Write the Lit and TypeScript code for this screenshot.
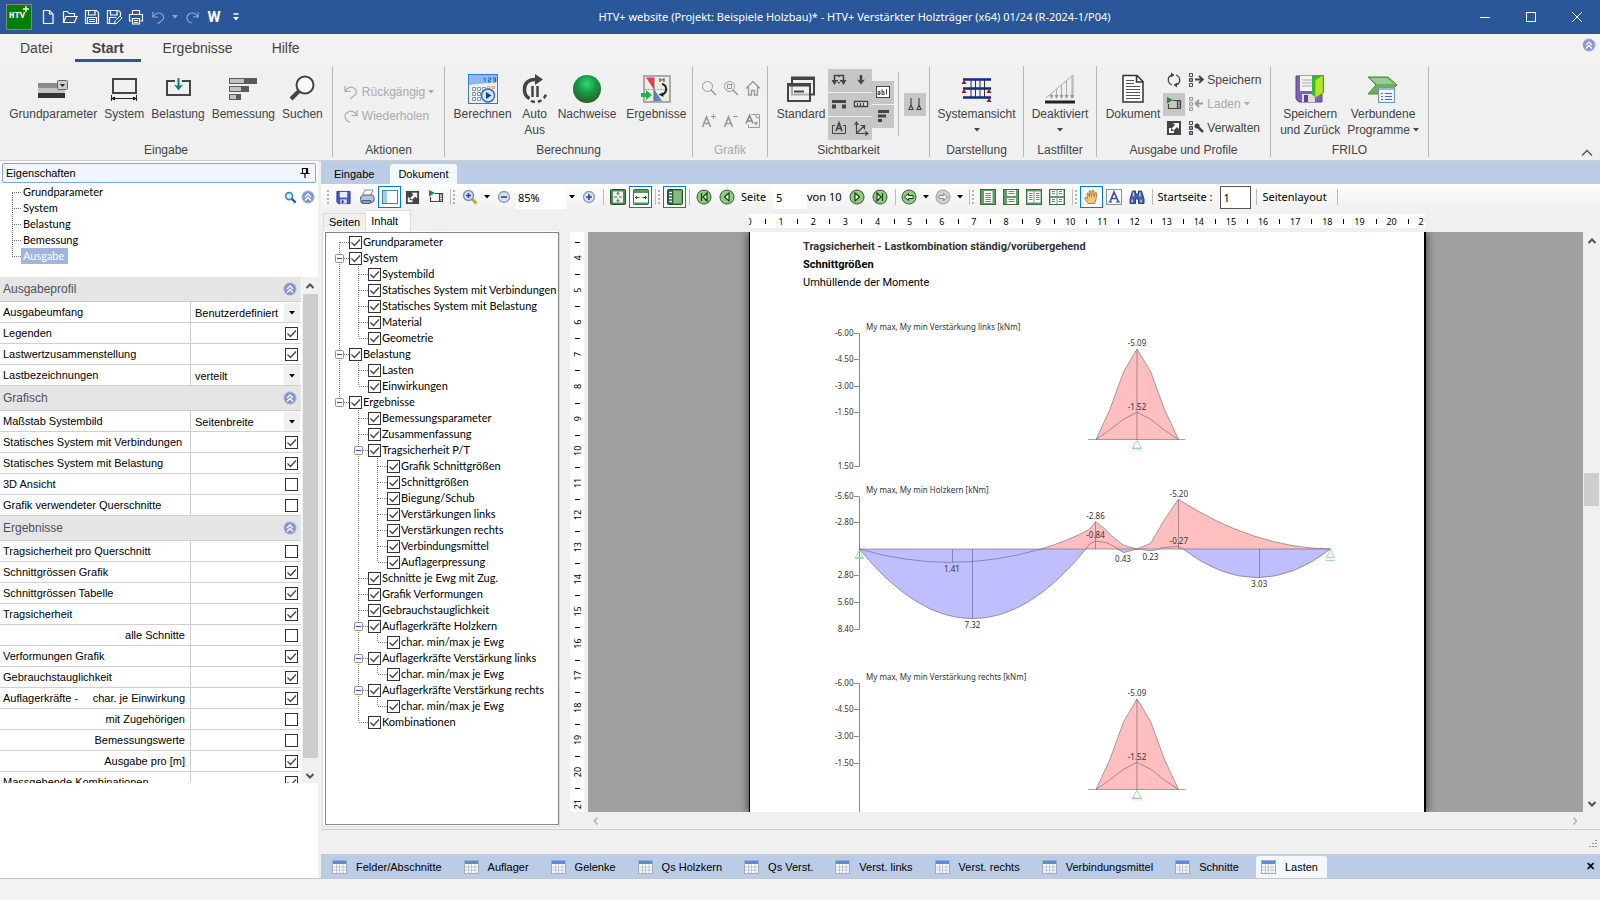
import { LitElement, html, svg, css, nothing, SVGTemplateResult, TemplateResult } from "lit";
import { customElement } from "lit/decorators.js";
import { classMap } from "lit/directives/class-map.js";

const FRAME = "#444";

const ICONS: Record<string, [string, SVGTemplateResult]> = {
  logo: ["0 0 26 26", svg`<rect x=".5" y=".5" width="25" height="25" fill="#008000" stroke="#7d8a7d"/><path d="M20 2v6M17 5h6" stroke="#fff" fill="none" stroke-width="1.3"/>`],
  fileNew: ["0 0 16 16", svg`<path d="M3.500 1.500h6l3.500 3.500v9.500h-9.500zM9.500 1.500v3.500h3.500" fill="none" stroke="#fff" stroke-width="1.200"/>`],
  folder: ["0 0 16 16", svg`<path d="M1.500 13.500v-11h4l1.500 2h5.500v2.500M1.500 13.500l2.500-6h11l-2.500 6z" fill="none" stroke="#fff" stroke-width="1.200"/>`],
  disk: ["0 0 16 16", svg`<path d="M1.500 1.500h11l2 2v11h-13zM4.500 1.500v4.500h6.500v-4.500M3.500 14.500v-6h9v6M5 10.500h6M5 12.500h6" fill="none" stroke="#fff" stroke-width="1.200"/>`],
  diskEdit: ["0 0 16 16", svg`<path d="M8 14.500h-6.500v-13h11l2 2v4M4.500 1.500v4.500h6.500v-4.500M3.500 14.500v-6h7" fill="none" stroke="#fff" stroke-width="1.200"/><path d="M8 15l1-3 5-5 2 2-5 5z" fill="#2a579a" stroke="#fff"/>`],
  printW: ["0 0 16 16", svg`<path d="M4.500 5.500v-4h7v4M3.500 12h-2v-6.500h13v6.500h-2M4.500 9.500h7v5.500h-7zM6 11.500h4M6 13.500h4" fill="none" stroke="#fff" stroke-width="1.200"/>`],
  undo: ["0 0 16 16", svg`<path d="M2 2v5.500h5.500M2 7.500c2-3 5-5 8-4s4 4 3 6-3 3-6 5.500" fill="none" stroke="currentColor" stroke-width="1.200"/>`],
  redo: ["0 0 16 16", svg`<path d="M14 2v5.500h-5.500M14 7.500c-2-3-5-5-8-4s-5 4-3.500 7 3 3 4.500 3.500" fill="none" stroke="currentColor" stroke-width="1.200"/>`],
  overflow: ["0 0 8 10", svg`<path d="M1.500 2h5" stroke="#fff" stroke-width="1.500"/><path d="M1 5h6l-3 3.500z" fill="#fff"/>`],
  min: ["0 0 12 12", svg`<path d="M1 6.500h10" stroke="#fff"/>`],
  max: ["0 0 12 12", svg`<rect x="1.500" y="1.500" width="9" height="9" fill="none" stroke="#fff"/>`],
  close: ["0 0 12 12", svg`<path d="M1 1l10 10M11 1L1 11" stroke="#fff"/>`],
  caret: ["0 0 6 4", svg`<path d="M0 0h6l-3 3.500z" fill="currentColor"/>`],
  params: ["0 0 32 22", svg`<rect x="1" y="5" width="27" height="6" fill="#8a8a8a"/><rect x="1" y="10" width="27" height="5" fill="#c4c4c4"/><rect x="1" y="15" width="27" height="5" fill="#333"/><rect x="20.500" y="2.500" width="10" height="9" rx="1" fill="#ccc" stroke="#666"/><path d="M23 6h5l-2.500 3z" fill="#222"/>`],
  system: ["0 0 30 26", svg`<rect x="4" y="3" width="23" height="14" fill="none" stroke=${FRAME} stroke-width="2"/><path d="M2.500 19v6M27.500 19v6M3 22.500h24M3 22.500l2.500-1.500v3zM27 22.500l-2.500-1.500v3z" stroke="#222" fill="#222"/>`],
  load: ["0 0 30 26", svg`<rect x="4" y="5" width="23" height="14" fill="none" stroke=${FRAME} stroke-width="2"/><rect x="12" y="2" width="7" height="8" fill="#f0f0f0"/><path d="M15.500 2v8" stroke="#0a8080" stroke-width="2"/><path d="M11 8.500l4.500 1.500 4.500-1.500-4.500 6z" fill="#0a8080"/>`],
  design: ["0 0 30 26", svg`<path d="M1 2h28v6H1zM1 10h20v6H1zM1 18h12v6H1z" fill="#5a5a5a"/><path d="M2 3h14v4H2zM2 11h11v4H2zM2 19h6v4H2z" fill="#c2c2c2"/>`],
  search: ["0 0 28 28", svg`<circle cx="17" cy="10" r="8.500" fill="#fafafa" stroke=${FRAME} stroke-width="2"/><path d="M11 16l-8 8" stroke=${FRAME} stroke-width="4"/>`],
  calc: ["0 0 30 30", svg`<rect x=".5" y=".5" width="29" height="29" fill="#eef3fb" stroke="#3b78c8"/><path d="M1 1h28v7l-28 3z" fill="#8db8ee"/><path d="M15.500 5l1.500-1v4M20 4h2.500v2h-2v2h2.500M25 4h2.500v4h-2.500M25.500 6h2" stroke="#2a5aa0" stroke-width=".9" fill="none"/><g fill="#fff" stroke="#7a8698" stroke-width=".9"><path d="M4.500 13.500h3v3h-3zM9.500 13.500h3v3h-3zM14.500 13.500h3v3h-3zM4.500 18.500h3v3h-3zM9.500 18.500h3v3h-3zM4.500 23.500h3v3h-3zM9.500 23.500h3v3h-3z"/><path d="M19.500 12.500h2.500v2h-2.500zM24 12.500h2.500v2h-2.500z" stroke="#e2a24a"/></g><circle cx="20" cy="21.500" r="6.500" fill="#cfe5fa" stroke="#2f70bc" stroke-width="1.500"/><path d="M18 18l5.500 3.500-5.500 3.500z" fill="#173f7a"/>`],
  auto: ["0 0 26 30", svg`<path d="M14 5.500C6 5 2 10 2.500 16c0 4 2 7 5 8.500" fill="none" stroke=${FRAME} stroke-width="3.500"/><path d="M13 0l8 5.500-8 5.500z" fill=${FRAME}/><path d="M10.500 12v11M15.500 12v11" stroke=${FRAME} stroke-width="2.500"/><path d="M9 27c4 2 9 1 12-2s3-5 3-6" fill="none" stroke=${FRAME} stroke-width="2.500" stroke-dasharray="4 3"/>`],
  ball: ["0 0 30 30", svg`<defs><radialGradient id="gb" cx=".5" cy=".32" r=".7"><stop offset="0" stop-color="#35d877"/><stop offset=".45" stop-color="#17994a"/><stop offset="1" stop-color="#2c5c1c"/></radialGradient></defs><circle cx="15" cy="15" r="14" fill="url(#gb)"/>`],
  results: ["0 0 32 30", svg`<rect x="4" y="2" width="26" height="26" fill="#efece4" stroke="#a9a9a9" stroke-width="2"/><path d="M6 3.500h8v12z" fill="#f0384c"/><path d="M14 15l8 12h-8z" fill="#5a86c0"/><path d="M14 3.500v24" stroke="#667"/><path d="M5 15.500h24" stroke="#aaa" stroke-dasharray="2 1"/><path d="M22 10c5 1 6 8 0 11" fill="none" stroke="#222" stroke-width="2"/><path d="M18.500 20.500l4.500-2 .5 4.500z" fill="#222"/><path d="M20 8V4.500l2 2 2-2V8" fill="none" stroke="#333"/><path d="M1 19h5v-3l6 5-6 5v-3H1z" fill="#25b34b"/>`],
  lens: ["0 0 16 16", svg`<circle cx="6.500" cy="6.500" r="5" fill="none" stroke="#999"/><path d="M10 10l5 5" stroke="#999" stroke-width="1.500"/>`],
  lensFit: ["0 0 16 16", svg`<circle cx="6.500" cy="6.500" r="5" fill="none" stroke="#999"/><rect x="4.500" y="4.500" width="4" height="4" fill="none" stroke="#999"/><path d="M10 10l5 5" stroke="#999" stroke-width="1.500"/>`],
  home: ["0 0 16 16", svg`<path d="M1 8.500L8 1.500l7 7M3.500 7v8h3v-4.500h3V15h3V7" fill="none" stroke="#999" stroke-width="1.300"/>`],
  fontUp: ["0 0 16 16", svg`<path d="M1.500 14L5.500 4l4 10M3 10.500h5.500" fill="none" stroke="#999" stroke-width="1.600"/><path d="M10 3.500h5M12.500 1v5" stroke="#999"/>`],
  fontDown: ["0 0 16 16", svg`<path d="M1.500 14L5.500 4l4 10M3 10.500h5.500" fill="none" stroke="#999" stroke-width="1.600"/><path d="M10 3.500h5" stroke="#999"/>`],
  fontDoc: ["0 0 16 16", svg`<path d="M6 1.500h8.500v13h-11v-3M11 1.500v3h3" fill="none" stroke="#999"/><path d="M1 10.500l3.500-8 3.500 8M2.500 8h4" fill="none" stroke="#888" stroke-width="1.600"/><path d="M9 9h4l-2 4z" fill="#999"/>`],
  windows: ["0 0 30 28", svg`<g fill="none" stroke=${FRAME}><rect x="6" y="2.500" width="22" height="17" stroke-width="2"/><path d="M5 3.500h24" stroke-width="3"/><rect x="2" y="9" width="22" height="17" stroke-width="2" fill="#f0f0f0" fill-opacity=".6"/><path d="M1 10h24" stroke-width="3"/><path d="M8 16.500h10" stroke-width="2"/></g>`],
  v1: ["0 0 16 16", svg`<path d="M3.500 9V3.500h9V9M8 3.500V8" fill="none" stroke=${FRAME} stroke-width="1.600"/><path d="M.5 8h6l-3 5zM5.500 8h5L8 12zM9.500 8h6l-3 5z" fill=${FRAME}/><path d="M7 5h2v5H7z" fill="#c8c6c4"/>`],
  v2: ["0 0 16 16", svg`<path d="M8 3v6" stroke=${FRAME} stroke-width="2.500"/><path d="M4 7.500l4 1 4-1-4 5z" fill=${FRAME}/>`],
  v3: ["0 0 16 16", svg`<path d="M1 4h14v3H1zM1 8.500h4v4H1zM11 8.500h4v4h-4z" fill=${FRAME}/>`],
  v4: ["0 0 16 16", svg`<path d="M1.500 5.500h13v5h-13zM4.500 7v3M7.500 7v3M10.500 7v3" fill="#eee" stroke=${FRAME} stroke-width="1.400"/>`],
  v5: ["0 0 16 16", svg`<path d="M4 5.500H1.500v8h13v-8H12" fill="none" stroke=${FRAME}/><path d="M5 11l3-8 3 8M6 8.500h4" fill="none" stroke=${FRAME} stroke-width="1.700"/>`],
  v6: ["0 0 16 16", svg`<path d="M3.500 14V3M1.500 5l2-3 2 3M3 13.500h11M12 11.500l3 2-3 2M4 13l7-7M7.500 5.500h4v4" fill="none" stroke=${FRAME} stroke-width="1.200"/>`],
  v7: ["0 0 16 16", svg`<rect x="1.500" y="2.500" width="13" height="11" fill="#fff" stroke=${FRAME}/><path d="M3 7.500h2v3h-2v-1.500h2M7 5v5.500h2v-3H7M11.500 5v5.500" fill="none" stroke=${FRAME}/>`],
  v8: ["0 0 16 16", svg`<path d="M3 2h11v3H3zM3 6.500h8v3H3zM3 11h4v3H3z" fill=${FRAME}/>`],
  v9: ["0 0 16 16", svg`<path d="M4 2v7M12 2v7M4 9l-2 4.500h4zM12 9l-2 4.500h4z" fill="none" stroke=${FRAME} stroke-width="1.200"/>`],
  sysview: ["0 0 32 26", svg`<path d="M2 3.500h28M2 12.500h28M2 21.500h28" stroke="#0a2a8c" stroke-width="2.500"/><path d="M10 4v17M14.500 4v17M19 4v17M23.500 4v17" stroke="#333"/><path d="M3 4l-2.500 4h5zM3 13l-2.500 4h5zM28 13l-2.500 4h5zM28 22l-2.500 4h5z" fill="#a01020"/>`],
  filter: ["0 0 32 30", svg`<path d="M2 24L29 1v23" fill="none" stroke="#aaa"/><path d="M7.500 19v5M12.500 15v9M17.500 11v13M22.500 7v17M28 3v21" stroke="#aaa"/><path d="M5.500 21l2 4 2-4zM10.500 21l2 4 2-4zM15.500 21l2 4 2-4zM20.500 21l2 4 2-4zM26 21l2 4 2-4z" fill="#999"/><path d="M1 28h30" stroke="#222" stroke-width="3"/>`],
  doc: ["0 0 24 30", svg`<path d="M2 1.500h14l6 6v20.500H2zM15.500 2v6h6" fill="#fff" stroke="#333" stroke-width="1.500"/><path d="M5 6.500h8M5 9.500h8M5 12.500h14M5 15.500h14M5 18.500h14M5 21.500h14M5 24.500h14" stroke="#555"/>`],
  refresh: ["0 0 16 16", svg`<path d="M6 13C1 11 1 4 6.500 3M10 3c5 2 5 9-.5 10" fill="none" stroke=${FRAME} stroke-width="1.300"/><path d="M5 .5L8.500 3 5 5.500zM11 10.500L7.500 13l3.500 2.500z" fill=${FRAME}/>`],
  film: ["0 0 16 16", svg`<path d="M7 4.500h7.500v8h-12V8M11.500 4.500v8" fill="none" stroke=${FRAME} stroke-width="1.200"/><path d="M13 5v8" stroke=${FRAME} stroke-dasharray="1.500 1"/><path d="M1 1l6 3-6 3.500z" fill="#1f8a34"/>`],
  popout: ["0 0 16 16", svg`<rect x="1" y="1" width="14" height="14" fill=${FRAME}/><path d="M7 3h6v6l-2-2-3.500 3.500-2-2L9 5zM3 8h2v3h3v2H3z" fill="#fff"/>`],
  profSave: ["0 0 16 16", svg`<g fill="#fff" stroke=${FRAME}><path d="M1.500 1.500h3v3h-3zM1.500 11.500h3v3h-3z"/><path d="M1.500 6.500h3v3h-3z" fill="#5cb6e8"/></g><path d="M7 7.500h7M11 4l4 3.500-4 3.500" fill="none" stroke=${FRAME} stroke-width="1.800"/>`],
  profLoad: ["0 0 16 16", svg`<g fill="#ddd" stroke="#999"><path d="M1.500 1.500h3v3h-3zM1.500 6.500h3v3h-3zM1.500 11.500h3v3h-3z"/></g><path d="M8 7.500h7M11 4L7.500 7.500 11 11" fill="none" stroke="#999" stroke-width="1.800"/>`],
  profManage: ["0 0 16 16", svg`<g fill="#fff" stroke=${FRAME}><path d="M1.500 1.500h3v3h-3z"/><path d="M1.500 6.500h3v3h-3zM1.500 11.500h3v3h-3z" fill="#5cb6e8"/></g><path d="M9 6l6 6" stroke=${FRAME} stroke-width="2.500"/><circle cx="9" cy="6" r="2.500" fill=${FRAME}/>`],
  saveBack: ["0 0 30 30", svg`<path d="M1 2h26v26H4l-3-3z" fill="#7a62b8" stroke="#5b4596"/><rect x="5" y="2" width="14" height="15" fill="#f4f4f8"/><path d="M7 6h10M7 9h10M7 12h10" stroke="#aaa"/><rect x="7" y="20" width="13" height="8" fill="#ddd"/><rect x="9" y="21" width="4" height="7" fill="#5b4596"/><path d="M17 1h12v18h-3l-5 4-4-2z" fill="#36b83c"/><path d="M20 6l8-5v18l-8 5z" fill="#b8e61e" stroke="#4aa020" stroke-width=".6"/>`],
  linked: ["0 0 32 30", svg`<path d="M1 3h20l9 8-9 9H1l8-9z" fill="#6fae5e" stroke="#4d8a3e"/><path d="M3 4h17l7 6H10z" fill="#9bcd8a"/><rect x="11.500" y="13.500" width="16" height="15" fill="#eef4fb" stroke="#6f93c4"/><path d="M12 14h15v2H12z" fill="#9ab8e0"/><path d="M14 19.500h2M18 19.500h7M14 22.500h2M18 22.500h7M14 25.500h2M18 25.500h7" stroke="#4673b4"/>`],
  up: ["0 0 12 12", svg`<path d="M1 8.500l5-5 5 5" fill="none" stroke="#555" stroke-width="1.300"/>`],
  collapse: ["0 0 14 14", svg`<circle cx="7" cy="7" r="6.500" fill="#9fb0e0"/><circle cx="7" cy="7" r="5.500" fill="#8593cf"/><path d="M4 7l3-3 3 3M4 10.500l3-3 3 3" fill="none" stroke="#fff" stroke-width="1.300"/>`],
  pin: ["0 0 10 12", svg`<path d="M2.500 1.500h5v5h-5zM6.500 1.500v5M.5 6.500h9M5 7v4" fill="none" stroke="#000" stroke-width="1.200"/>`],
  find: ["0 0 14 14", svg`<circle cx="5.500" cy="5.500" r="3.700" fill="#dff0fa" stroke="#3a88c8" stroke-width="1.800"/><path d="M8.500 8.500l4 4" stroke="#2a5798" stroke-width="2.500"/>`],
  scUp: ["0 0 10 8", svg`<path d="M1.500 6L5 2.500 8.500 6" fill="none" stroke="#505050" stroke-width="2"/>`],
  scDown: ["0 0 10 8", svg`<path d="M1.500 2L5 5.500 8.500 2" fill="none" stroke="#505050" stroke-width="2"/>`],
  scLeft: ["0 0 8 10", svg`<path d="M5.500 1.500L2.500 5l3 3.500" fill="none" stroke="#b0b0b0" stroke-width="1.500"/>`],
  scRight: ["0 0 8 10", svg`<path d="M2.500 1.500L5.500 5l-3 3.500" fill="none" stroke="#b0b0b0" stroke-width="1.500"/>`],
  diskBlue: ["0 0 16 16", svg`<path d="M1 1.500h14v13H2.500L1 13z" fill="#4656c0" stroke="#28348c"/><rect x="4" y="2" width="8" height="6" fill="#e8ecfa"/><rect x="4.500" y="10" width="7" height="4.500" fill="#dde"/><rect x="6" y="11" width="2" height="3" fill="#28348c"/>`],
  print: ["0 0 16 16", svg`<path d="M6 1h8l-2.500 6H3z" fill="#fff" stroke="#7c8aa8"/><path d="M1.500 8l3-2h9l1.500 2v4l-2 1.500h-11z" fill="#b8c4dc" stroke="#53617f"/><path d="M3 11.500h9l-1 3H3z" fill="#6fa8e0" stroke="#53617f"/>`],
  pane: ["0 0 16 16", svg`<rect x=".5" y="1.500" width="15" height="13" fill="#fff" stroke="#567aa8"/><rect x="1" y="2" width="4" height="12" fill="#9fd0ee"/>`],
  zoomTool: ["0 0 16 16", svg`<path d="M9.500 9.500l5 5" stroke="#d9a03a" stroke-width="3"/><circle cx="6.500" cy="6.500" r="5" fill="#cfdcf0" stroke="#7d8fae" stroke-width="1.400"/><path d="M4 6.500h5M6.500 4v5" stroke="#2c4a86" stroke-width="1.500"/>`],
  minus: ["0 0 14 14", svg`<circle cx="7" cy="7" r="5.500" fill="#d6dfee" stroke="#8a9ab8" stroke-width="1.300"/><path d="M4 7h6" stroke="#2c4a86" stroke-width="1.600"/>`],
  plus: ["0 0 14 14", svg`<circle cx="7" cy="7" r="5.500" fill="#d6dfee" stroke="#8a9ab8" stroke-width="1.300"/><path d="M4 7h6M7 4v6" stroke="#2c4a86" stroke-width="1.600"/>`],
  fitPage: ["0 0 16 16", svg`<rect x=".5" y=".5" width="15" height="15" rx="1" fill="#4d8a52" stroke="#234f28"/><rect x="3" y="2.500" width="10" height="11" fill="#eef7ee"/><path d="M8 3.500v3M8 9.500v3M4 8h3M9 8h3M6.500 5L8 3.500 9.500 5M6.500 11L8 12.500 9.500 11" stroke="#1c4722" fill="none" stroke-width=".8"/>`],
  fitWidth: ["0 0 16 16", svg`<rect x=".5" y=".5" width="15" height="15" rx="1" fill="#5c9660" stroke="#3c6a40"/><rect x="1" y="4" width="14" height="9.500" fill="#f6faf6"/><path d="M2.500 8.500h4M9.500 8.500h4M4 7L2.500 8.500 4 10M12 7l1.500 1.500L12 10" stroke="#1c4722" fill="none" stroke-width=".9"/>`],
  thumbs: ["0 0 16 16", svg`<rect x=".5" y=".5" width="15" height="15" rx="1" fill="#5f9f62" stroke="#234f28"/><rect x="1" y="1" width="5" height="14" fill="#2b5c30"/><path d="M2 3.500h3M2 6.500h3M2 9.500h3M2 12.500h3" stroke="#fff" stroke-width="1.500"/><rect x="7" y="2" width="7" height="12" fill="#86bb86"/>`],
  navFirst: ["0 0 16 16", svg`<circle cx="8" cy="8" r="7" fill="#8fce7e" stroke="#2c5c2c"/><path d="M11 4L7 8l4 4zM5.500 4v8" fill="#fff" stroke="#173d17" stroke-width="1.200"/>`],
  navPrev: ["0 0 16 16", svg`<circle cx="8" cy="8" r="7" fill="#8fce7e" stroke="#2c5c2c"/><path d="M10 4L5.500 8l4.500 4z" fill="#fff" stroke="#173d17" stroke-width="1.200"/>`],
  navNext: ["0 0 16 16", svg`<circle cx="8" cy="8" r="7" fill="#8fce7e" stroke="#2c5c2c"/><path d="M6 4l4.500 4L6 12z" fill="#fff" stroke="#173d17" stroke-width="1.200"/>`],
  navLast: ["0 0 16 16", svg`<circle cx="8" cy="8" r="7" fill="#8fce7e" stroke="#2c5c2c"/><path d="M5 4l4 4-4 4zM10.500 4v8" fill="#fff" stroke="#173d17" stroke-width="1.200"/>`],
  navBack: ["0 0 16 16", svg`<circle cx="8" cy="8" r="7" fill="#8fce7e" stroke="#2c5c2c"/><path d="M3.500 8l4-3.500v2h4.500v3H7.500v2z" fill="#fff" stroke="#173d17"/>`],
  navFwd: ["0 0 16 16", svg`<circle cx="8" cy="8" r="7" fill="#d0d0d0" stroke="#9a9a9a"/><path d="M12.500 8l-4-3.500v2H4v3h4.500v2z" fill="#eee" stroke="#8a8a8a"/>`],
  pg1: ["0 0 16 16", svg`<rect x=".5" y=".5" width="15" height="15" fill="#5f9f62" stroke="#3c6a40"/><rect x="4" y="2" width="8.500" height="12" fill="#fff"/><path d="M5.500 4.500h5.500M5.500 6.500h5.500M5.500 8.500h5.500M5.500 10.500h5.500M5.500 12.500h5.500" stroke="#6480b4"/>`],
  pg2: ["0 0 16 16", svg`<rect x=".5" y=".5" width="15" height="15" fill="#5f9f62" stroke="#3c6a40"/><path d="M4 1h9v6H4zM4 9h9v6H4z" fill="#fff"/><path d="M5.500 2.500h6M5.500 4.500h6M5.500 10.500h6M5.500 12.500h6" stroke="#6480b4"/>`],
  pg3: ["0 0 16 16", svg`<rect x=".5" y=".5" width="15" height="15" fill="#5f9f62" stroke="#3c6a40"/><path d="M1.500 2.500h6v11h-6zM8.500 2.500h6v11h-6z" fill="#fff"/><path d="M3 4.500h3.500M3 6.500h3.500M3 8.500h3.500M3 10.500h3.500M10 4.500h3.500M10 6.500h3.500M10 8.500h3.500M10 10.500h3.500" stroke="#6480b4"/>`],
  pg4: ["0 0 16 16", svg`<rect x=".5" y=".5" width="15" height="15" fill="#5f9f62" stroke="#3c6a40"/><path d="M1.500 1h6v6h-6zM8.500 1h6v6h-6zM1.500 9h6v6h-6zM8.500 9h6v6h-6z" fill="#fff"/><path d="M3 2.500h3M3 4.500h3M10 2.500h3M10 4.500h3M3 10.500h3M3 12.500h3M10 10.500h3M10 12.500h3" stroke="#6480b4"/>`],
  hand: ["0 0 16 16", svg`<path d="M5 14.500L1.500 9l1.200-1 2 1.800L3.800 4.500l1.200-.5 1.500 3.800L6.200 2l1.500-.3L8.500 7.300 9.500 1.500l1.500.2v6L12.500 3.500l1.300.5-.8 6.500-1.500 4z" fill="#f2c878" stroke="#a8752c" stroke-width=".9" stroke-linejoin="round"/>`],
  selText: ["0 0 16 16", svg`<rect x=".5" y=".5" width="15" height="15" fill="none" stroke="#222" stroke-dasharray="1 1"/><path d="M4 13L8 3l4.500 10M5.500 9.500h5" stroke="#3558a8" stroke-width="1.700" fill="none"/><path d="M2.500 13h3.500M10 13h4" stroke="#3558a8"/>`],
  binocular: ["0 0 16 16", svg`<path d="M3.500 2h3v3h3V2h3l2.500 8v4.500H9.500V10h-3v4.500H1V10z" fill="#4463ac" stroke="#2a417c"/><path d="M3 10.500v3M12 10.500v3M4.500 3.500v4M11 3.500v4" stroke="#b8c8ee" stroke-width="1.500"/>`],
  sheet: ["0 0 15 14", svg`<rect x=".5" y=".5" width="14" height="13" fill="#fff" stroke="#9fadc4"/><path d="M1 1h13v3H1z" fill="#5a8cdc"/><path d="M1 7h13M1 10h13M4.500 4v9M7.500 4v9M11 4v9" stroke="#bcc6d6"/>`],
  grip: ["0 0 10 10", svg`<path d="M8 1v1M8 4v1M8 7v1M5 4v1M5 7v1M2 7v1" stroke="#999" stroke-width="2"/>`],
};

const icon = (name: string, w = 16, h = w): TemplateResult => {
  const [box, body] = ICONS[name];
  return html`<svg class="ic" width=${w} height=${h} viewBox=${box} aria-hidden="true">${body}</svg>`;
};

interface Node { t: string; kids?: Node[] }
const n = (t: string, ...kids: Node[]): Node => ({ t, kids: kids.length ? kids : undefined });

const CONTENT: Node[] = [
  n("Grundparameter"),
  n("System", n("Systembild"), n("Statisches System mit Verbindungen"), n("Statisches System mit Belastung"), n("Material"), n("Geometrie")),
  n("Belastung", n("Lasten"), n("Einwirkungen")),
  n("Ergebnisse",
    n("Bemessungsparameter"), n("Zusammenfassung"),
    n("Tragsicherheit P/T", n("Grafik Schnittgrößen"), n("Schnittgrößen"), n("Biegung/Schub"), n("Verstärkungen links"), n("Verstärkungen rechts"), n("Verbindungsmittel"), n("Auflagerpressung")),
    n("Schnitte je Ewg mit Zug."), n("Grafik Verformungen"), n("Gebrauchstauglichkeit"),
    n("Auflagerkräfte Holzkern", n("char. min/max je Ewg")),
    n("Auflagerkräfte Verstärkung links", n("char. min/max je Ewg")),
    n("Auflagerkräfte Verstärkung rechts", n("char. min/max je Ewg")),
    n("Kombinationen")),
];

type Prop = { label: string; value: boolean | string; right?: boolean; lead?: string };
const p = (label: string, value: boolean | string, right = false, lead = ""): Prop => ({ label, value, right, lead });
const SECTIONS: { title: string; rows: Prop[] }[] = [
  { title: "Ausgabeprofil", rows: [p("Ausgabeumfang", "Benutzerdefiniert"), p("Legenden", true), p("Lastwertzusammenstellung", true), p("Lastbezeichnungen", "verteilt")] },
  { title: "Grafisch", rows: [p("Maßstab Systembild", "Seitenbreite"), p("Statisches System mit Verbindungen", true), p("Statisches System mit Belastung", true), p("3D Ansicht", false), p("Grafik verwendeter Querschnitte", false)] },
  { title: "Ergebnisse", rows: [
    p("Tragsicherheit pro Querschnitt", false), p("Schnittgrössen Grafik", true), p("Schnittgrössen Tabelle", true), p("Tragsicherheit", true),
    p("alle Schnitte", false, true), p("Verformungen Grafik", true), p("Gebrauchstauglichkeit", true), p("char. je Einwirkung", true, false, "Auflagerkräfte -"),
    p("mit Zugehörigen", false, true), p("Bemessungswerte", false, true), p("Ausgabe pro [m]", true, true), p("Massgebende Kombinationen", true)] },
];

const TABLE_TABS = ["Felder/Abschnitte", "Auflager", "Gelenke", "Qs Holzkern", "Qs Verst.", "Verst. links", "Verst. rechts", "Verbindungsmittel", "Schnitte", "Lasten"];

@customElement("ribbon-bar")
export class RibbonBar extends LitElement {
  static styles = css`
    :host { display: block; background: #f0f0f0; color: #444; font: 12px/16px "Liberation Sans", Arial, sans-serif; border-bottom: 1px solid #cfcfcf; }
    button { font: inherit; color: inherit; background: none; border: 0; padding: 0; margin: 0; }
    .ic { display: block; flex: none; }
    .menu { display: flex; gap: 5px; height: 28px; padding: 0 4px 0 3px; background: #f3f2f1; align-items: stretch; }
    .menu a { color: #444; text-decoration: none; font-size: 14px; line-height: 28px; height: 28px; padding: 0 17px; border-bottom: 3px solid transparent; box-sizing: border-box; }
    .menu a.on { font-weight: bold; border-color: #2a579a; }
    .menu .fold { margin-left: auto; align-self: flex-start; padding-top: 4px; }
    .groups { display: grid; grid-template-columns: 333px 112px 248px 75px 162px 94px 73px 174px 158px 1fr; height: 98px; }
    .group { display: grid; grid-template-rows: 1fr 14px; justify-items: center; border-right: 1px solid #b6b6b6; margin: 4px 0 3px; }
    .group.dim > .name { color: #aaa; }
    .name { line-height: 14px; }
    .row { display: flex; align-items: flex-start; padding-top: 7px; }
    .gap6 { gap: 7px; }
    .gap9 { gap: 10px; padding-left: 3px; }
    .big { display: grid; grid-template-rows: 33px auto; justify-items: center; text-align: center; }
    .big .pic { display: grid; place-items: center; height: 31px; }
    .big .sub { height: 15px; display: grid; place-items: center; }
    .stack { display: grid; gap: 8px; padding-top: 18px; color: #aaa; align-content: start; }
    .line { display: flex; align-items: center; gap: 3px; height: 16px; }
    .tools { display: grid; grid-template-columns: repeat(3, 22px); row-gap: 17px; padding: 14px 0 0 2px; justify-items: center; align-content: start; }
    .cells { display: grid; grid-template-columns: 22px 22px; gap: 1px 0; }
    .cells.one { grid-template-columns: 22px; }
    .cell { width: 22px; height: 23px; background: #c8c6c4; display: grid; place-items: center; }
    .vis { display: flex; align-items: center; height: 72px; padding: 2px 0 0 6px; align-self: start; }
    .vis .big { align-self: flex-start; padding-top: 5px; margin-right: 3px; }
    .rule { width: 1px; height: 64px; background: #b6b6b6; margin: 0 5px 0 4px; }
    .out { display: flex; height: 72px; align-self: start; padding-top: 2px; gap: 3px; }
    .out .big { padding-top: 5px; }
    .col { display: grid; grid-auto-rows: 24px; align-items: center; }
    .col .cell { height: 23px; background: none; }
    .col .cell.on { background: #c8c6c4; }
    .off { color: #aaa; }
    .gutter { display: flex; justify-content: flex-end; align-items: flex-end; padding: 0 7px 1px 0; }
  `;
  private big(name: string, w: number, h: number, label: string, second?: string | TemplateResult) {
    return html`<button class="big"><span class="pic">${icon(name, w, h)}</span><span>${label}</span>${second ? html`<span class="sub">${second}</span>` : nothing}</button>`;
  }
  private cell(name: string, label: string, on = true) {
    return html`<button class=${classMap({ cell: true, on })} aria-label=${label}>${icon(name)}</button>`;
  }
  render() {
    const caret = icon("caret", 6, 4);
    return html`
      <nav class="menu">
        <a href="#datei">Datei</a><a href="#start" class="on">Start</a><a href="#ergebnisse">Ergebnisse</a><a href="#hilfe">Hilfe</a>
        <button class="fold" aria-label="Einklappen">${icon("collapse", 14)}</button>
      </nav>
      <div class="groups">
        <div class="group"><div class="row gap6">
          ${this.big("params", 32, 22, "Grundparameter")}${this.big("system", 30, 26, "System")}${this.big("load", 30, 26, "Belastung")}${this.big("design", 30, 26, "Bemessung")}${this.big("search", 28, 28, "Suchen")}
        </div><span class="name">Eingabe</span></div>
        <div class="group"><div class="stack">
          <button class="line">${icon("undo")}<span>Rückgängig</span>${caret}</button>
          <button class="line">${icon("redo")}<span>Wiederholen</span></button>
        </div><span class="name">Aktionen</span></div>
        <div class="group"><div class="row gap9">
          ${this.big("calc", 30, 30, "Berechnen")}${this.big("auto", 26, 30, "Auto", "Aus")}${this.big("ball", 30, 30, "Nachweise")}${this.big("results", 32, 30, "Ergebnisse")}
        </div><span class="name">Berechnung</span></div>
        <div class="group dim"><div class="tools">
          ${["lens", "lensFit", "home", "fontUp", "fontDown", "fontDoc"].map((i) => html`<button aria-label=${i}>${icon(i)}</button>`)}
        </div><span class="name">Grafik</span></div>
        <div class="group"><div class="vis">
          ${this.big("windows", 30, 28, "Standard")}
          <div class="cells">${["v1", "v2", "v3", "v4", "v5", "v6"].map((i) => this.cell(i, i))}</div>
          <div class="cells one">${["v7", "v8"].map((i) => this.cell(i, i))}</div>
          <div class="rule"></div>${this.cell("v9", "Auflager")}
        </div><span class="name">Sichtbarkeit</span></div>
        <div class="group"><div class="row">${this.big("sysview", 32, 26, "Systemansicht", caret)}</div><span class="name">Darstellung</span></div>
        <div class="group"><div class="row">${this.big("filter", 32, 30, "Deaktiviert", caret)}</div><span class="name">Lastfilter</span></div>
        <div class="group"><div class="out">
          ${this.big("doc", 24, 30, "Dokument")}
          <div class="col">${this.cell("refresh", "Aktualisieren", false)}${this.cell("film", "Vorschau")}${this.cell("popout", "Fenster", false)}</div>
          <div class="col">
            <button class="line">${icon("profSave")}<span>Speichern</span></button>
            <button class="line off">${icon("profLoad")}<span>Laden</span>${caret}</button>
            <button class="line">${icon("profManage")}<span>Verwalten</span></button>
          </div>
        </div><span class="name">Ausgabe und Profile</span></div>
        <div class="group"><div class="row gap6">
          ${this.big("saveBack", 30, 30, "Speichern", "und Zurück")}${this.big("linked", 32, 30, "Verbundene", html`<span class="line">Programme ${caret}</span>`)}
        </div><span class="name">FRILO</span></div>
        <div class="gutter"><button aria-label="Menüband reduzieren">${icon("up", 12)}</button></div>
      </div>`;
  }
}

const checkboxStyles = css`
  input[type="checkbox"] {
    appearance: none; flex: none; width: 13px; height: 13px; margin: 0; box-sizing: border-box; border: 1px solid #333; background: #fff;
  }
  input[type="checkbox"]:checked {
    background: #fff url("data:image/svg+xml,%3Csvg xmlns='http://www.w3.org/2000/svg' viewBox='0 0 11 11'%3E%3Cpath d='M1.500 5.500l3 3 5.500-6' fill='none' stroke='%23444' stroke-width='1.300'/%3E%3C/svg%3E") center / 11px no-repeat;
  }
`;

@customElement("property-panel")
export class PropertyPanel extends LitElement {
  static styles = [checkboxStyles, css`
    :host { display: flex; flex-direction: column; background: #fff; color: #000; font: 11px/16px "Liberation Sans", Arial, sans-serif; min-height: 0; }
    button { background: none; border: 0; padding: 0; margin: 0; }
    .ic { display: block; flex: none; }
    .head { display: flex; align-items: center; justify-content: space-between; height: 20px; box-sizing: border-box; margin: 2px 2px 0; padding: 0 5px 0 3px; border: 1px solid #7da7e4; border-radius: 2px; background: #f0f6fe; }
    .top { display: flex; justify-content: space-between; align-items: flex-start; height: 94px; box-sizing: border-box; padding: 1px 3px 0 12px; }
    .nav { list-style: none; margin: 0; padding: 0; font-size: var(--tree-size); font-family: var(--tree-font); }
    .nav li { display: flex; height: 16px; align-items: center; }
    .nav a { color: #000; text-decoration: none; padding: 0 4px 0 2px; line-height: 16px; }
    .nav a.on { background: #9fb4df; color: #fff; }
    .tools { display: flex; gap: 4px; padding-top: 6px; }
    .body { display: grid; grid-template-columns: 1fr 16px; gap: 1px; flex: 1; min-height: 0; overflow: hidden; }
    .grid { overflow: hidden; }
    .sec { display: flex; align-items: center; justify-content: space-between; height: 25px; box-sizing: border-box; padding: 0 4px 0 3px; background: #e5e5e5; border-bottom: 1px solid #cfcfcf; color: #4f4f5f; font-size: 12px; margin: 0; font-weight: normal; }
    .prop { display: grid; grid-template-columns: 191px 1fr; height: 21px; box-sizing: border-box; border-bottom: 1px solid #cfcfcf; }
    .prop label { display: flex; align-items: center; padding: 0 5px 0 3px; border-right: 1px solid #cfcfcf; white-space: nowrap; justify-content: space-between; }
    .prop label.right { justify-content: flex-end; }
    .val { display: flex; align-items: center; justify-content: flex-end; padding-right: 3px; }
    .pick { display: grid; grid-template-columns: 1fr 16px; padding-right: 1px; }
    .pick select { grid-area: 1 / 1 / 2 / 3; appearance: none; border: 0; background: none; padding: 1px 0 0 4px; margin: 0; font: inherit; border-radius: 0; color: #000; z-index: 1; }
    .pick span { grid-area: 1 / 2; background: #f0f0f0; display: grid; place-items: center; margin-top: 1px; }
    .bar { display: flex; flex-direction: column; align-items: center; background: #f0f0f0; }
    .bar .cap { display: grid; place-items: center; height: 17px; flex: none; }
    .bar .thumb { width: 15px; background: #cdcdcd; flex: 1; }
    .bar .low { height: 25px; padding-top: 10px; box-sizing: border-box; }
    .info { height: 95px; flex: none; }
  `];
  private guide(last: boolean, first: boolean) {
    return html`<svg class="ic" width="9" height="16"><path d="M.5 ${first ? 9 : 0}V${last ? 9 : 16}M0 8.500h9" stroke="#777" stroke-dasharray="1 1" fill="none"/></svg>`;
  }
  render() {
    const nav = ["Grundparameter", "System", "Belastung", "Bemessung", "Ausgabe"];
    return html`
      <div class="head"><span>Eigenschaften</span><button aria-label="Anheften">${icon("pin", 10, 12)}</button></div>
      <div class="top">
        <ul class="nav">${nav.map((t, i) => html`<li>${this.guide(i === 4, i === 0)}<a href="#${t}" class=${i === 4 ? "on" : ""}>${t}</a></li>`)}</ul>
        <div class="tools"><button aria-label="Suchen">${icon("find", 13)}</button><button aria-label="Einklappen">${icon("collapse", 14)}</button></div>
      </div>
      <div class="body">
        <div class="grid">
          ${SECTIONS.map((s, si) => html`
            <h3 class="sec"><span>${s.title}</span><button aria-label="${s.title} einklappen">${icon("collapse", 14)}</button></h3>
            ${s.rows.map((r, ri) => {
              const id = `p${si}-${ri}`;
              return html`<div class="prop">
                <label for=${id} class=${r.right ? "right" : ""}>${r.lead ? html`<span>${r.lead}</span>` : nothing}<span>${r.label}</span></label>
                ${typeof r.value === "boolean"
                  ? html`<div class="val"><input type="checkbox" id=${id} ?checked=${r.value} /></div>`
                  : html`<div class="pick"><select id=${id}><option>${r.value}</option></select><span>${icon("caret", 6, 4)}</span></div>`}
              </div>`;
            })}`)}
        </div>
        <div class="bar"><span class="cap">${icon("scUp", 10, 8)}</span><span class="thumb"></span><span class="cap low">${icon("scDown", 10, 8)}</span></div>
      </div>
      <div class="info"></div>`;
  }
}

const CM = 32.13;

@customElement("moment-charts")
export class MomentCharts extends LitElement {
  static styles = css`
    :host { display: block; }
    svg { display: block; width: 100%; }
    text { font: 8px "Noto Sans", "Open Sans", sans-serif; fill: #333; }
    .mid { text-anchor: middle; }
    .end { text-anchor: end; }
    .ax { stroke: #8a8a8a; fill: none; }
    .ln { stroke: #5a5060; stroke-opacity: .65; fill: none; stroke-width: .8; }
    .red { fill: #ffbfbf; }
    .blue { fill: #bfbfff; }
    .sup { stroke: #8fcf96; fill: none; stroke-width: .8; }
  `;
  private axis(title: string, top: number, labels: [string, number][], bottom: number) {
    return svg`
      <text x="866" y=${top - 3}>${title}</text>
      <path class="ax" d="M854 ${top + 0.5}h5.500V${bottom}"/>
      ${labels.map(([t, y], i) => svg`<text class="end" x="853.500" y=${y + 3}>${t}</text>${i ? svg`<path class="ax" d="M854 ${y + 0.5}h5.500"/>` : nothing}`)}`;
  }
  private peak(dy: number) {
    const outer = "M1096 439.500L1109.700 410L1123.500 372L1137 349L1150.800 372L1164.300 409L1178.500 439.500";
    return svg`<g transform="translate(0 ${dy})">
      <path class="red" d="${outer}z"/><path class="ln" d=${outer}/>
      <path class="ln" d="M1096 439.500L1109.700 430L1123.500 419.300L1137 412.300L1150.800 419.300L1164.300 430L1178.500 439.500"/>
      <path class="ln" d="M1088 439.500H1185.500M1137 349V440"/>
      <path class="sup" d="M1137 440.500l-4.500 7.500h9zM1132 448.500h10M1133 450h1M1135.500 450h1M1138 450h1M1140.500 450h1"/>
      <text class="mid" x="1137" y="346">-5.09</text><text class="mid" x="1137" y="410">-1.52</text></g>`;
  }
  render() {
    const redL = "M1041 549Q1068 541 1089.600 529.300L1095.500 521.700L1103 527.300L1111.500 535.700L1123.600 545.300L1137 549";
    const redR = "M1137 549L1150.700 543.300L1163.800 520.700L1178.300 499.300Q1254 548 1330.500 549";
    const blueL = "M859.400 549Q972.500 688.400 1086 549";
    const blueR = "M1183 549Q1257 606.300 1330.500 549";
    const labels: [string, number, number][] = [["1.41", 952, 572], ["7.32", 972.5, 628], ["-2.86", 1095.5, 519], ["-0.84", 1095.5, 538], ["0.43", 1123, 562], ["0.23", 1150.5, 560], ["-5.20", 1178.8, 497], ["-0.27", 1178.8, 544], ["3.03", 1259.3, 587]];
    return html`<svg viewBox="750 300 674 600" role="img" aria-label="Momentenverlauf">
      ${this.axis("My max, My min Verstärkung links [kNm]", 333, [["-6.00", 333], ["-4.50", 359], ["-3.00", 386], ["-1.50", 412], ["1.50", 466]], 467)}
      ${this.peak(0)}
      ${this.axis("My max, My min Holzkern [kNm]", 496, [["-5.60", 496], ["-2.80", 522], ["2.80", 575], ["5.60", 602], ["8.40", 629]], 630)}
      <path class="blue" d="${blueL}z"/><path class="blue" d="${blueR}z"/>
      <path class="red" d="${redL}z"/><path class="red" d="${redR}z"/>
      <path class="blue" d="M1116 549L1123.600 552.700L1137 549L1144 550L1150.700 550.700L1157.500 549.700z"/>
      <path class="ln" d="${blueL}L1089.600 544L1095.500 541L1106.600 542.700L1114.800 546.700L1123.600 552.700L1137 549L1150.700 550.700L1157.500 549.700L1162.300 547.700L1178.300 546.300L1183 549Q1257 606.300 1330.500 549"/>
      <path class="ln" d="M859.400 549Q950 575.700 1041 549"/><path class="ln" d=${redL}/><path class="ln" d=${redR}/>
      <path class="ln" d="M859 549H1330.500M952.500 549V562.300M972.500 549V618.700M1095.500 521.700V549M1178.500 499.300V549M1259.500 549V577.700"/>
      <path class="sup" d="M859.400 550l-4 7.500h8zM855 558.500h9M1330.500 550l-4 7.500h8zM1326 560.500h9"/>
      ${labels.map(([t, x, y]) => svg`<text class="mid" x=${x} y=${y}>${t}</text>`)}
      ${this.axis("My max, My min Verstärkung rechts [kNm]", 683, [["-6.00", 683], ["-4.50", 709], ["-3.00", 736], ["-1.50", 763]], 830)}
      ${this.peak(350)}
    </svg>`;
  }
}

@customElement("document-view")
export class DocumentView extends LitElement {
  static styles = [checkboxStyles, css`
    :host { display: flex; flex-direction: column; min-width: 0; min-height: 0; background: #f0f0f0; color: #000; font: 11px/16px "Liberation Sans", Arial, sans-serif; }
    button { font: inherit; color: inherit; background: none; border: 0; padding: 0; margin: 0; }
    .ic { display: block; flex: none; }
    .tabs { display: flex; align-items: flex-end; gap: 9px; height: 23px; background: #bbcde6; padding-left: 6px; flex: none; }
    .tabs button { height: 20px; padding: 0 7px; }
    .tabs .on { background: #f3f8fe; border-radius: 3px 3px 0 0; padding: 0 8px; }
    .bar { display: flex; align-items: center; height: 26px; flex: none; padding-left: 6px; background: linear-gradient(#fefefe, #f1f1f1); font-family: "Noto Sans", "Open Sans", sans-serif; }
    .bar > button { width: 23px; height: 22px; display: grid; place-items: center; box-sizing: border-box; flex: none; }
    .bar > button.on { border: 1px solid #0078d7; background: #fafcff; }
    .bar > button.thin { width: 11px; }
    .bar > button.word { width: auto; padding: 0 7px 0 4px; }
    .sep { width: 1px; height: 16px; background: #bdbdbd; margin: 0 2px 0 3px; flex: none; }
    .dots { width: 2px; height: 15px; margin: 0 3px 0 0; flex: none; background: repeating-linear-gradient(#b4b4b4 0 2px, transparent 2px 4px); }
    .bar input { font: inherit; border: 0; height: 23px; box-sizing: border-box; margin: 0; padding: 0 3px; background: #fff; }
    .zoom { width: 51px; }
    .page-no { width: 34px; margin: 0 4px 0 5px; }
    .bar input.start { width: 31px; border: 1px solid #555; margin: 0 2px 0 7px; }
    .lbl { padding-left: 3px; white-space: nowrap; flex: none; }
    .lbl.wide { width: 32px; }
    .lbl.of { padding: 0 4px 0 0; }
    .work { display: grid; grid-template-columns: 239px 10px 14px 4px minmax(0, 1fr) 17px; grid-template-rows: 21px minmax(0, 1fr) 17px; flex: 1; min-height: 0; border-bottom: 1px solid #cfcfcf; }
    .subtabs { grid-area: 1 / 1; display: flex; align-items: flex-end; padding-left: 2px; }
    .subtabs button { border: 1px solid #dcdcdc; border-bottom: 0; height: 18px; line-height: 17px; padding: 0 5px; }
    .subtabs button.on { background: #fff; height: 21px; line-height: 18px; padding: 0 12px 0 5px; border-left: 0; }
    .listbox { grid-area: 2 / 1 / 4 / 2; border: 1px solid #dcdcdc; border-top: 0; background: #fff; padding: 1px 0 1px 2px; margin: 0 0 2px 1px; }
    .tree { list-style: none; margin: 0; padding: 1px 0 0 4px; height: 100%; border: 1px solid #828790; box-sizing: border-box; font-size: var(--tree-size); font-family: var(--tree-font); }
    .tree li { display: flex; height: 16px; align-items: center; }
    .tree label { display: flex; align-items: center; gap: 1px; white-space: nowrap; line-height: 16px; }
    .hr { grid-area: 1 / 5; display: flex; justify-content: center; padding: 4px 0 0 2px; }
    .hr svg { display: block; background: #fff; width: 676px; height: 14px; flex: none; }
    .vr { grid-area: 2 / 3; background: #fff; margin-top: 1px; overflow: hidden; }
    .vr svg { display: block; }
    .ruler text { font: 9px "Noto Sans", sans-serif; text-anchor: middle; fill: #000; }
    .ruler path { stroke: #000; }
    .desk { grid-area: 2 / 5; background: #a0a0a0; overflow: hidden; display: flex; justify-content: center; margin-top: 1px; padding-left: 4px; }
    .page { width: 674px; flex: none; background: #fff; border: solid #000; border-width: 0 2px 0 1px; box-shadow: 0 0 8px 1px #444; }
    .page h2, .page h3, .page p { margin: 0; padding-left: 53px; font: 700 11px/18px Roboto, "Open Sans", sans-serif; }
    .page h2 { color: #333; padding-top: 6px; }
    .page p { font-weight: 400; padding-bottom: 8px; }
    .vs { grid-area: 2 / 6; display: grid; grid-template-rows: 17px 1fr 17px; justify-items: center; align-items: center; margin-top: 1px; }
    .vs .track { align-self: stretch; width: 15px; display: grid; grid-template-rows: 224fr 33fr 289fr; }
    .vs .thumb { grid-row: 2; background: #cdcdcd; }
    .hs { grid-area: 3 / 5; display: flex; justify-content: space-between; align-items: center; padding: 0 4px; }
    .spare { height: 24px; flex: none; display: flex; justify-content: flex-end; align-items: flex-end; padding: 0 2px 5px 0; box-sizing: border-box; }
    .sheets { display: flex; align-items: flex-end; gap: 8px; height: 24px; flex: none; background: #bbcde6; padding: 0 5px 0 6px; }
    .sheets .sheet { display: flex; align-items: center; gap: 9px; height: 22px; padding: 0 9px 1px 5px; border-radius: 3px 3px 0 0; white-space: nowrap; }
    .sheets .on { background: #f3f8fe; }
    .sheets .x { margin-left: auto; font-weight: bold; font-size: 11px; height: 24px; }
  `];
  private rows(nodes: Node[], open: boolean[] = []): TemplateResult[] {
    return nodes.flatMap((node, i) => {
      const last = i === nodes.length - 1;
      const first = i === 0 && open.length === 0;
      const depth = open.length;
      const row = html`<li>
        <svg class="ic" width=${19 * (depth + 1)} height="16" aria-hidden="true">
          ${open.map((o, d) => (o ? svg`<path d="M${19 * d + 9.5} 0v16" stroke="#808080" stroke-dasharray="1 1"/>` : nothing))}
          <path d="M${19 * depth + 9.5} ${first ? 8 : 0}V${last ? 8 : 16}M${19 * depth + 10} 8.500h9" stroke="#808080" stroke-dasharray="1 1" fill="none"/>
          ${node.kids ? svg`<rect x=${19 * depth + 5.5} y="4.500" width="8" height="8" rx="1" fill="#f4f4f4" stroke="#919191"/><path d="M${19 * depth + 7} 8.500h5" stroke="#3a55a4"/>` : nothing}
        </svg>
        <label><input type="checkbox" checked />${node.t}</label></li>`;
      return [row, ...(node.kids ? this.rows(node.kids, [...open, !last]) : [])];
    });
  }
  private btn(name: string, label: string, on = false, size = 16) {
    return html`<button class=${on ? "on" : ""} aria-label=${label}>${icon(name, size)}</button>`;
  }
  private drop(label: string) {
    return html`<button class="thin" aria-label=${label}>${icon("caret", 6, 4)}</button>`;
  }
  render() {
    const sep = html`<span class="sep"></span>`;
    const dots = html`<span class="dots"></span>`;
    return html`
      <div class="tabs"><button>Eingabe</button><button class="on">Dokument</button></div>
      <div class="bar">
        ${dots}${this.btn("diskBlue", "Speichern", false, 15)}${this.btn("print", "Drucken")}${this.btn("pane", "Seitenleiste", true)}${this.btn("popout", "Fenster", false, 15)}${this.btn("film", "Vorschau")}
        ${sep}${dots}${this.btn("zoomTool", "Zoom")}${this.drop("Zoomstufen")}${this.btn("minus", "Verkleinern", false, 14)}
        <input class="zoom" aria-label="Zoomfaktor" value="85%" />${this.drop("Zoomfaktor wählen")}${this.btn("plus", "Vergrößern", false, 14)}
        ${sep}${this.btn("fitPage", "Ganze Seite")}${this.btn("fitWidth", "Seitenbreite", true)}
        ${sep}${dots}${this.btn("thumbs", "Miniaturen", true)}${sep}${this.btn("navFirst", "Erste Seite")}${this.btn("navPrev", "Vorherige Seite")}
        <label class="lbl wide" for="pg">Seite</label><input class="page-no" id="pg" value="5" /><span class="lbl of">von 10</span>
        ${this.btn("navNext", "Nächste Seite")}${this.btn("navLast", "Letzte Seite")}${sep}${this.btn("navBack", "Zurück")}${this.drop("Verlauf")}${this.btn("navFwd", "Vor")}${this.drop("Verlauf vor")}
        ${sep}${dots}${this.btn("pg1", "Einzelseite")}${this.btn("pg2", "Fortlaufend")}${this.btn("pg3", "Doppelseite")}${this.btn("pg4", "Vier Seiten")}
        ${sep}${dots}${this.btn("hand", "Verschieben", true)}${this.btn("selText", "Text wählen")}${this.btn("binocular", "Suchen")}
        ${sep}<label class="lbl" for="st">Startseite :</label><input class="start" id="st" value="1" />${sep}<button class="word">Seitenlayout</button>${sep}
      </div>
      <div class="work">
        <div class="subtabs"><button>Seiten</button><button class="on">Inhalt</button></div>
        <div class="listbox"><ul class="tree">${this.rows(CONTENT)}</ul></div>
        <div class="hr"><svg class="ruler" viewBox="0 0 676 14">
          ${Array.from({ length: 22 }, (_, i) => svg`<text x=${i * CM} y="10.500">${i}</text>${i < 21 ? svg`<path d="M${Math.round((i + 0.5) * CM) + 0.5} 5v5"/>` : nothing}`)}
        </svg></div>
        <div class="vr"><svg class="ruler" width="14" height="580">
          ${Array.from({ length: 18 }, (_, i) => { const y = 26 + i * CM; return svg`<text transform="translate(10.500 ${y}) rotate(-90)">${i + 4}</text><path d="M5 ${Math.round(y - CM / 2) + 0.5}h5"/>`; })}
        </svg></div>
        <div class="desk"><div class="page">
          <h2>Tragsicherheit - Lastkombination ständig/vorübergehend</h2><h3>Schnittgrößen</h3><p>Umhüllende der Momente</p>
          <moment-charts></moment-charts>
        </div></div>
        <div class="vs">${icon("scUp", 10, 8)}<div class="track"><span class="thumb"></span></div>${icon("scDown", 10, 8)}</div>
        <div class="hs">${icon("scLeft", 8, 10)}${icon("scRight", 8, 10)}</div>
      </div>
      <div class="spare">${icon("grip", 10)}</div>
      <div class="sheets">
        ${TABLE_TABS.map((t, i) => html`<button class=${classMap({ sheet: true, on: i === 9 })}>${icon("sheet", 15, 14)}<span>${t}</span></button>`)}
        <button class="x" aria-label="Schließen">✕</button>
      </div>`;
  }
}

@customElement("app-root")
export class AppRoot extends LitElement {
  static styles = css`
    :host {
      display: grid; grid-template-rows: 34px auto minmax(0, 1fr) 22px; height: 100vh; overflow: hidden; background: #f0f0f0;
      --tree-font: "Lato", "Liberation Sans", sans-serif; --tree-size: 11px;
    }
    button { background: none; border: 0; padding: 0; margin: 0; color: inherit; display: grid; place-items: center; height: 24px; }
    .ic { display: block; }
    .title { display: grid; grid-template-columns: auto 1fr auto; align-items: center; background: #2a579a; color: #fff; font: 11px/16px "Noto Sans", "Open Sans", sans-serif; }
    .caption { text-align: center; padding-bottom: 1px; }
    .quick { display: flex; align-items: center; padding-left: 6px; }
    .logo { display: grid; margin-right: 5px; }
    .logo svg, .logo b { grid-area: 1 / 1; }
    .logo b { font: bold 9px/24px "Liberation Mono", monospace; padding-left: 3px; color: #fff; }
    .quick button { width: 22px; }
    .quick .faint { color: #8fa9d4; }
    .quick .thin { width: 12px; }
    .word { font: bold 15px/16px Roboto, sans-serif; }
    .win { display: flex; justify-content: flex-end; }
    .win button { width: 46px; }
    .main { display: grid; grid-template-columns: 318px minmax(0, 1fr); gap: 3px; min-height: 0; }
    .status { background: #f3f2f1; border-top: 1px solid #c6c6c6; }
  `;
  render() {
    return html`
      <header class="title">
        <div class="quick">
          <span class="logo">${icon("logo", 26)}<b>HTV</b></span>
          <button aria-label="Neu">${icon("fileNew")}</button><button aria-label="Öffnen">${icon("folder")}</button><button aria-label="Speichern">${icon("disk")}</button>
          <button aria-label="Speichern unter">${icon("diskEdit")}</button><button aria-label="Drucken">${icon("printW")}</button>
          <button class="faint" aria-label="Rückgängig">${icon("undo", 15)}</button><button class="faint thin" aria-label="Verlauf">${icon("caret", 6, 4)}</button>
          <button class="faint" aria-label="Wiederholen">${icon("redo", 15)}</button><button class="word">W</button><button aria-label="Anpassen">${icon("overflow", 8, 10)}</button>
        </div>
        <span class="caption">HTV+ website (Projekt: Beispiele Holzbau)* - HTV+ Verstärkter Holzträger (x64) 01/24 (R-2024-1/P04)</span>
        <div class="win"><button aria-label="Minimieren">${icon("min", 12)}</button><button aria-label="Maximieren">${icon("max", 12)}</button><button aria-label="Schließen">${icon("close", 12)}</button></div>
      </header>
      <ribbon-bar></ribbon-bar>
      <main class="main"><property-panel></property-panel><document-view></document-view></main>
      <footer class="status"></footer>`;
  }
}
